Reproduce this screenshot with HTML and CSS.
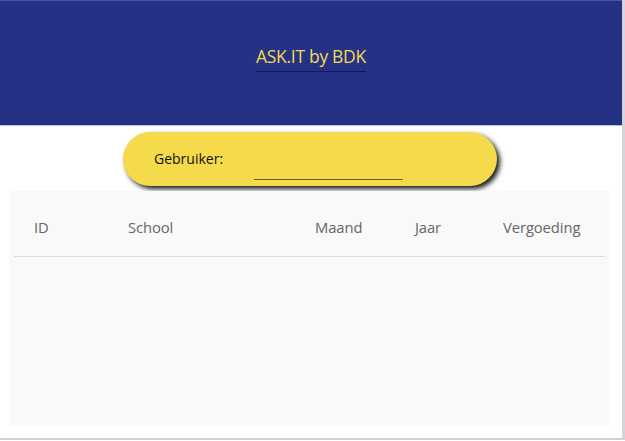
FILE: index.html
```html
<!DOCTYPE html>
<html>
<head>
<meta charset="utf-8">
<link rel="stylesheet" href="styles.css">
</head>
<body>
<div class="frame">
  <header class="topbar">
    <span class="title">ASK.IT by BDK</span>
  </header>
  <div class="user-row">
    <div class="pill">
      <label class="pill-label">Gebruiker:</label>
      <input class="pill-input" type="text">
    </div>
  </div>
  <section class="panel">
    <div class="thead">
      <span>ID</span>
      <span>School</span>
      <span>Maand</span>
      <span>Jaar</span>
      <span>Vergoeding</span>
    </div>
  </section>
</div>
</body>
</html>
```
FILE: styles.css
```css
* { box-sizing: border-box; }
html, body { margin: 0; padding: 0; background: #ffffff; }
body { font-family: "Open Sans", "Noto Sans", sans-serif; }
.frame {
  width: 625px;
  height: 440px;
  border-right: 3px solid #d4d4dc;
  border-bottom: 2px solid #cfcfcf;
  background: #fff;
  display: flex;
  flex-direction: column;
}
.topbar {
  height: 126px;
  background: #243185;
  border-top: 1px solid #4a56a0;
  border-bottom: 1px solid #b9bdd6;
  display: flex;
  justify-content: center;
  align-items: flex-start;
  padding-top: 43px;
}
.title {
  color: #f2d955;
  font-size: 17.5px;
  letter-spacing: -0.3px;
  line-height: 25px;
  padding-bottom: 2px;
  border-bottom: 1px solid #141a55;
}
.user-row {
  display: flex;
  padding: 6px 0 0 123px;
  height: 65px;
}
.pill {
  width: 374px;
  height: 54px;
  border-radius: 27px;
  background: #f5da4c;
  box-shadow: 3px 3px 5px rgba(0,0,0,0.9);
  display: flex;
  align-items: center;
  padding-left: 31px;
}
.pill-label {
  font-size: 14px;
  color: #111;
  width: 100px;
  margin-top: -1px;
}
.pill-input {
  width: 149px;
  height: 20px;
  margin-top: 22px;
  border: 0;
  border-bottom: 1px solid #6e6120;
  background: transparent;
  outline: none;
}
.panel {
  margin-left: 9px;
  width: 600px;
  height: 235px;
  background: #f9f9f9;
  padding: 0 4px 0 5px;
}
.thead {
  display: grid;
  grid-template-columns: 94px 187px 100px 88px 1fr;
  padding: 6px 0 0 20px;
  height: 66px;
  align-items: center;
  border-bottom: 1px solid #dddddd;
  font-size: 14.8px;
  letter-spacing: -0.1px;
  color: #666;
}
```
